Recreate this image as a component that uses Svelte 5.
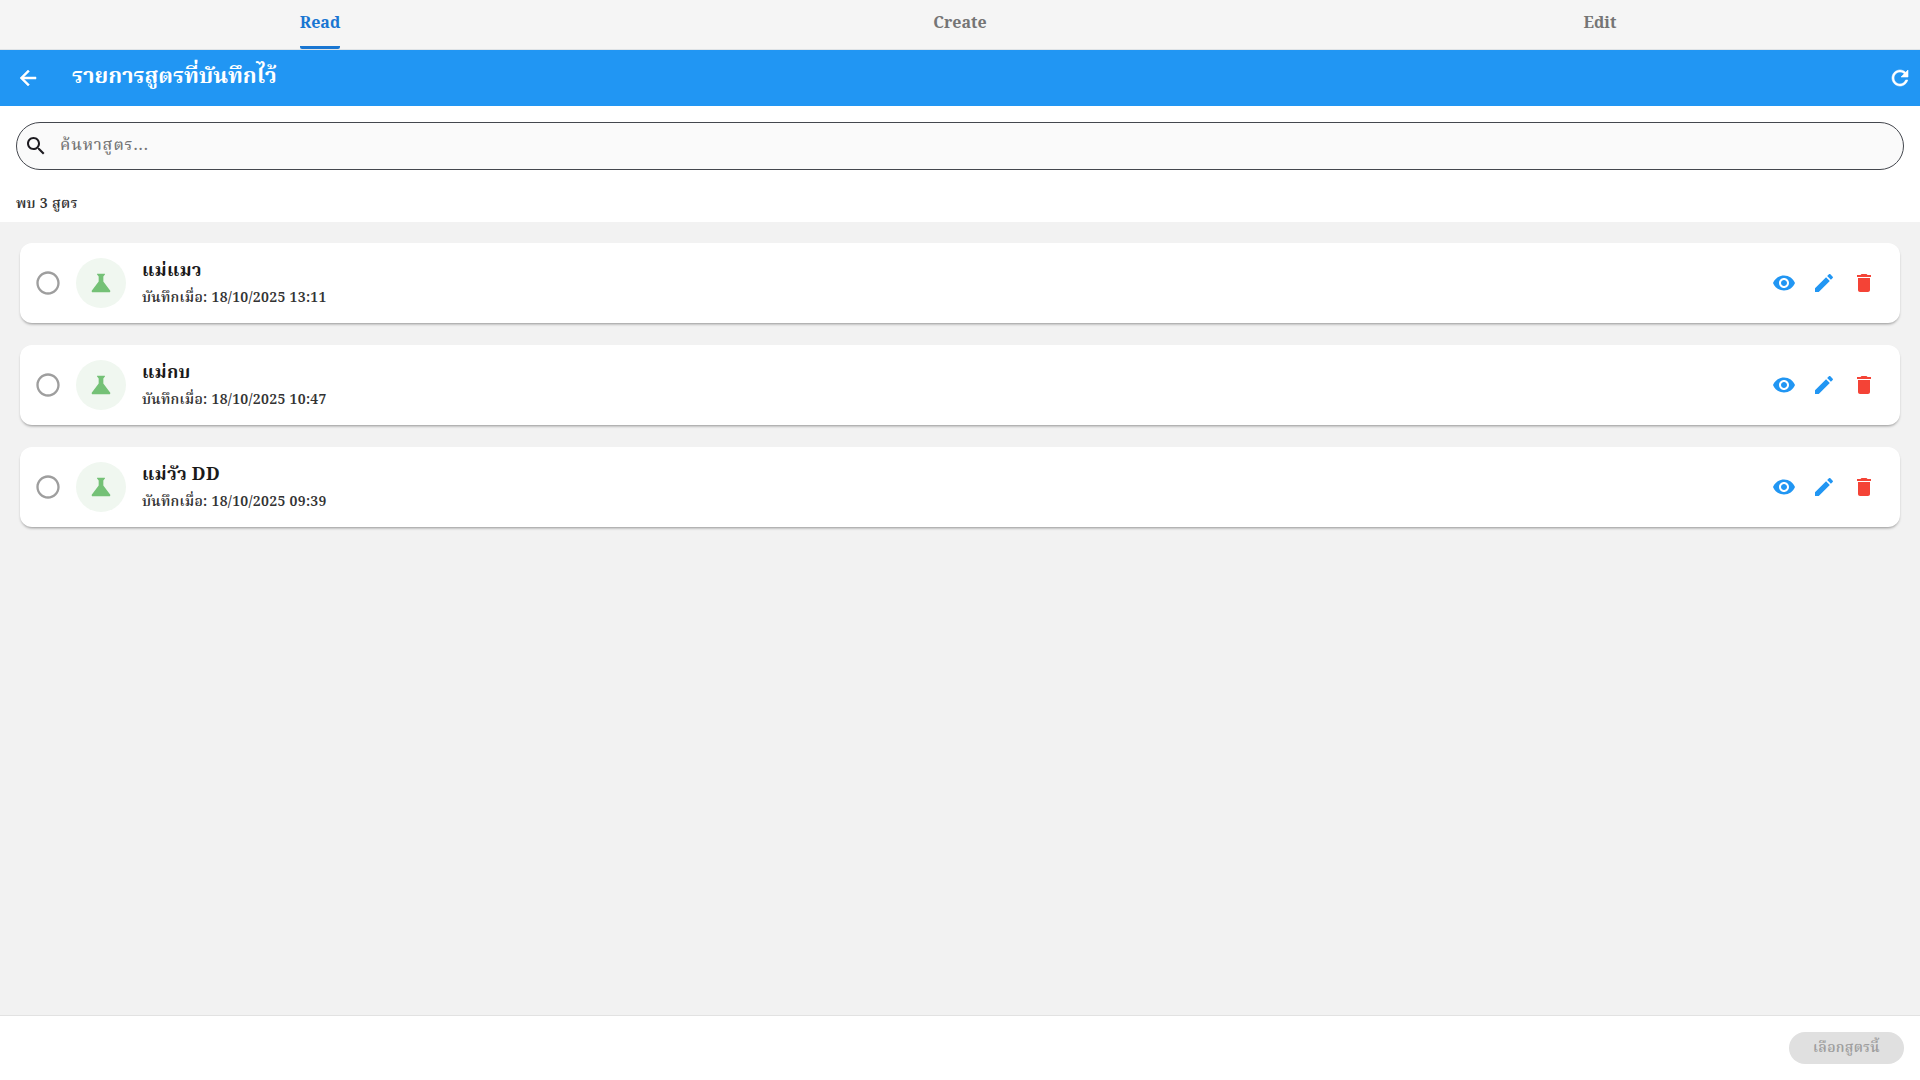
<script>
	const tabs = ['Read', 'Create', 'Edit'];
	const recipes = [
		{ name: 'แม่แมว', saved: '18/10/2025 13:11' },
		{ name: 'แม่กบ', saved: '18/10/2025 10:47' },
		{ name: 'แม่วัว DD', saved: '18/10/2025 09:39' }
	];
</script>

<div class="page">
	<nav class="tabs">
		{#each tabs as tab, i}
			<div class="tab" class:active={i === 0}>
				<span class="tab-label">{tab}</span>
			</div>
		{/each}
	</nav>

	<header class="appbar">
		<svg class="back" viewBox="0 0 24 24"><path d="M20 11H7.83l5.59-5.59L12 4l-8 8 8 8 1.41-1.41L7.83 13H20v-2z" /></svg>
		<h1>รายการสูตรที่บันทึกไว้</h1>
		<svg class="refresh" viewBox="0 0 24 24"><path d="M17.65 6.35C16.2 4.9 14.21 4 12 4c-4.42 0-7.99 3.58-7.99 8s3.57 8 7.99 8c3.73 0 6.84-2.55 7.73-6h-2.08c-.82 2.33-3.04 4-5.65 4-3.31 0-6-2.69-6-6s2.69-6 6-6c1.66 0 3.14.69 4.22 1.78L13 11h7V4l-2.35 2.35z" /></svg>
	</header>

	<section class="search-area">
		<div class="search">
			<svg viewBox="0 0 24 24"><path d="M15.5 14h-.79l-.28-.27C15.41 12.59 16 11.11 16 9.5 16 5.91 13.09 3 9.5 3S3 5.91 3 9.5 5.91 16 9.5 16c1.61 0 3.09-.59 4.23-1.57l.27.28v.79l5 4.99L20.49 19l-4.99-5zm-6 0C7.01 14 5 11.99 5 9.5S7.01 5 9.5 5 14 7.01 14 9.5 11.99 14 9.5 14z" /></svg>
			<span>ค้นหาสูตร...</span>
		</div>
		<p class="count">พบ 3 สูตร</p>
	</section>

	<main class="list">
		{#each recipes as recipe}
			<article class="card">
				<svg class="radio" viewBox="0 0 24 24"><path d="M12 2C6.48 2 2 6.48 2 12s4.48 10 10 10 10-4.48 10-10S17.52 2 12 2zm0 18c-4.42 0-8-3.58-8-8s3.58-8 8-8 8 3.58 8 8-3.58 8-8 8z" /></svg>
				<div class="avatar">
					<svg viewBox="0 0 24 24"><path d="M19.8 18.4 14 10.67V6.5l1.35-1.69c.26-.33.03-.81-.39-.81H9.04c-.42 0-.65.48-.39.81L10 6.5v4.17L4.2 18.4c-.49.66-.02 1.6.8 1.6h14c.82 0 1.29-.94.8-1.6z" /></svg>
				</div>
				<div class="info">
					<div class="name">{recipe.name}</div>
					<div class="saved">บันทึกเมื่อ: {recipe.saved}</div>
				</div>
				<div class="actions">
					<svg class="blue" viewBox="0 0 24 24"><path d="M12 4.5C7 4.5 2.73 7.61 1 12c1.73 4.39 6 7.5 11 7.5s9.27-3.11 11-7.5c-1.73-4.39-6-7.5-11-7.5zM12 17c-2.76 0-5-2.24-5-5s2.24-5 5-5 5 2.24 5 5-2.24 5-5 5zm0-8c-1.66 0-3 1.34-3 3s1.34 3 3 3 3-1.34 3-3-1.34-3-3-3z" /></svg>
					<svg class="blue" viewBox="0 0 24 24"><path d="M3 17.25V21h3.75L17.81 9.94l-3.75-3.75L3 17.25zM20.71 7.04c.39-.39.39-1.02 0-1.41l-2.34-2.34c-.39-.39-1.02-.39-1.41 0l-1.83 1.83 3.75 3.75 1.83-1.83z" /></svg>
					<svg class="red" viewBox="0 0 24 24"><path d="M6 19c0 1.1.9 2 2 2h8c1.1 0 2-.9 2-2V7H6v12zM19 4h-3.5l-1-1h-5l-1 1H5v2h14V4z" /></svg>
				</div>
			</article>
		{/each}
	</main>

	<footer class="footer">
		<button disabled>เลือกสูตรนี้</button>
	</footer>
</div>

<style>
	:global(body) {
		margin: 0;
	}

	.page {
		width: 1920px;
		height: 1080px;
		display: flex;
		flex-direction: column;
		background: #f2f2f2;
		font-family: 'Noto Serif', 'Noto Serif Thai', 'DejaVu Serif', serif;
		overflow: hidden;
	}

	.tabs {
		flex: none;
		height: 49px;
		display: flex;
		background: #f5f5f5;
		border-bottom: 1px solid #dfe3e6;
	}

	.tab {
		flex: 1;
		display: flex;
		justify-content: center;
		font-size: 16px;
		font-weight: 700;
		color: #757575;
	}

	.tab-label {
		padding-top: 10px;
		height: 49px;
		box-sizing: border-box;
		line-height: 24px;
	}

	.tab.active {
		color: #1976d2;
	}

	.tab.active .tab-label {
		border-bottom: 3px solid #1976d2;
		border-radius: 2px;
	}

	.appbar {
		flex: none;
		height: 56px;
		display: flex;
		align-items: center;
		padding: 0 8px 0 16px;
		background: #2196f3;
		color: #fff;
		fill: #fff;
	}

	.back {
		width: 24px;
		height: 24px;
		flex: none;
		stroke: #fff;
		stroke-width: 0.5;
	}

	.appbar h1 {
		margin: 0 0 2px 32px;
		flex: 1;
		font-size: 22px;
		font-weight: 700;
	}

	.refresh {
		width: 24px;
		height: 24px;
		flex: none;
		stroke: #fff;
		stroke-width: 0.6;
	}

	.search-area {
		flex: none;
		height: 116px;
		box-sizing: border-box;
		padding: 16px 16px 0;
		background: #fff;
	}

	.search {
		height: 48px;
		box-sizing: border-box;
		display: flex;
		align-items: center;
		gap: 12px;
		padding: 0 12px 0 7px;
		border: 1px solid #44474e;
		border-radius: 24px;
		background: #fafafa;
		color: #757575;
		font-size: 16px;
		font-weight: 500;
		letter-spacing: 0.9px;
	}

	.search span {
		margin-bottom: 1px;
	}

	.search svg {
		width: 24px;
		height: 24px;
		fill: #1d1b20;
	}

	.count {
		margin: 23px 0 0;
		font-size: 14px;
		font-weight: 600;
		letter-spacing: 0.3px;
		color: #333;
		line-height: 20px;
	}

	.list {
		flex: 1;
		display: flex;
		flex-direction: column;
		gap: 22px;
		padding: 21px 20px 0;
	}

	.card {
		height: 80px;
		display: flex;
		align-items: center;
		padding: 0 16px;
		background: #fff;
		border-radius: 12px;
		box-shadow: 0 2px 3px -1px rgba(0, 0, 0, 0.4);
	}

	.radio {
		width: 28px;
		height: 28px;
		margin-left: -2px;
		fill: #9e9e9e;
		flex: none;
	}

	.avatar {
		width: 50px;
		height: 50px;
		margin-left: 14px;
		border-radius: 50%;
		background: #f0f7f0;
		display: flex;
		align-items: center;
		justify-content: center;
		flex: none;
	}

	.avatar svg {
		width: 28px;
		height: 28px;
		fill: #74c176;
	}

	.info {
		flex: 1;
		margin-left: 16px;
	}

	.name {
		font-size: 18px;
		font-weight: 700;
		letter-spacing: 0.25px;
		color: #1a1a1a;
		line-height: 26px;
		margin: -4px 0 5px;
	}

	.saved {
		font-size: 14px;
		font-weight: 600;
		letter-spacing: 0.3px;
		color: #333;
		line-height: 20px;
	}

	.actions {
		display: flex;
		gap: 16px;
		margin-right: 8px;
	}

	.actions svg {
		width: 24px;
		height: 24px;
	}

	.blue {
		fill: #2196f3;
	}

	.red {
		fill: #f44336;
	}

	.footer {
		flex: none;
		height: 65px;
		box-sizing: border-box;
		display: flex;
		justify-content: flex-end;
		align-items: center;
		padding: 0 16px;
		background: #fff;
		border-top: 1px solid #e2e2e2;
	}

	.footer button {
		width: 115px;
		height: 32px;
		padding: 0;
		border: none;
		border-radius: 16px;
		background: #e0e0e0;
		color: #9e9e9e;
		font-family: inherit;
		font-size: 14px;
		font-weight: 600;
		letter-spacing: 0.25px;
	}
</style>
